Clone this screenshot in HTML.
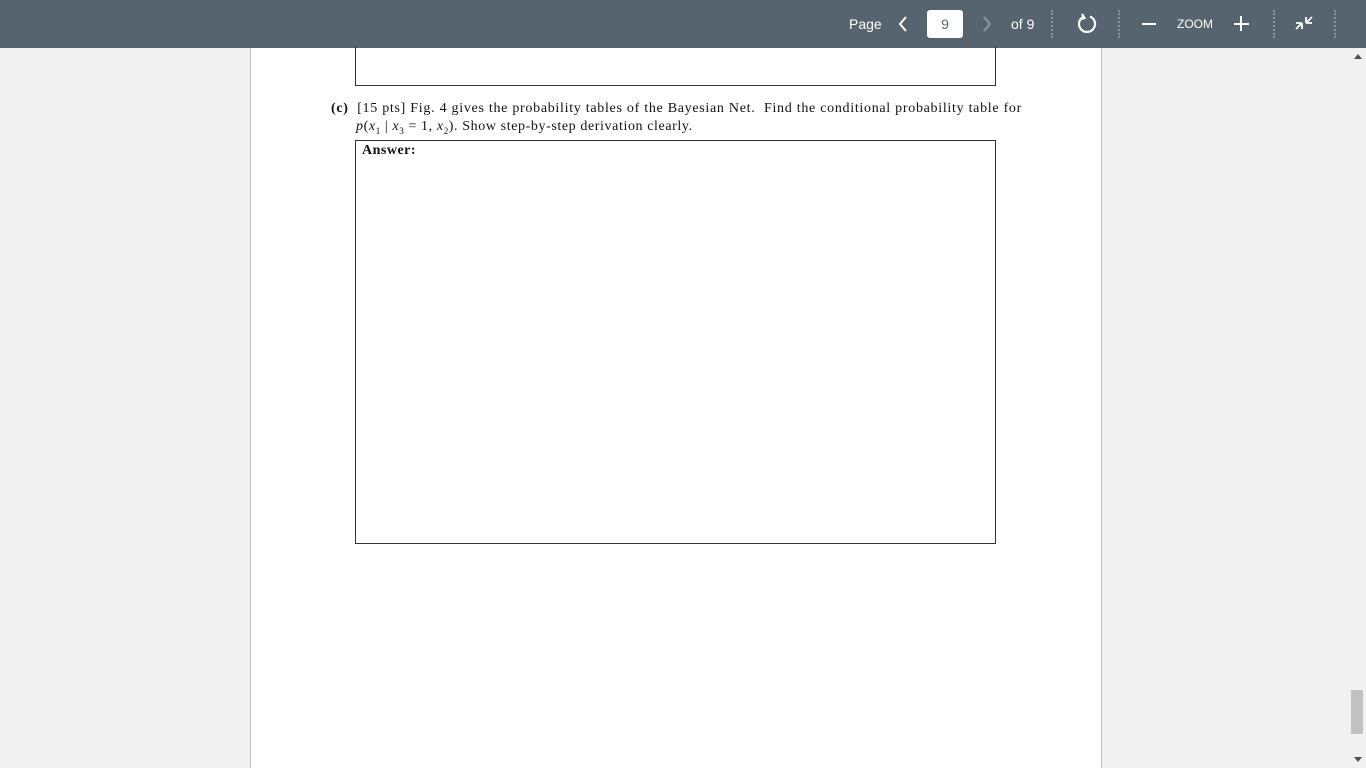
<!DOCTYPE html>
<html><head><meta charset="utf-8"><style>
*{margin:0;padding:0;box-sizing:border-box}
body{width:1366px;height:768px;overflow:hidden;background:#f1f1f1;position:relative;font-family:"Liberation Serif",serif}
.bar{position:absolute;left:0;top:0;width:1366px;height:48px;background:#566470;color:#fff;font-family:"Liberation Sans",sans-serif}
.bar span,.bar div{position:absolute}
.sep{width:0;border-left:2px dotted #8a96a0;top:10px;height:28px}
.page{position:absolute;left:250px;top:48px;width:852px;height:720px;background:#fff;border-left:1px solid #c4c4c8;border-right:1px solid #c4c4c8}
.box{position:absolute;border:1px solid #333}
.txt{position:absolute;font-size:14px;color:#111;white-space:nowrap}
</style></head><body>
<div class="bar">
<span style="left:849px;top:16px;font-size:14px">Page</span>
<svg style="position:absolute;left:897px;top:15px" width="12" height="18"><path d="M9 2L3 9L9 16" stroke="#fff" stroke-width="2" fill="none"/></svg>
<div style="left:927px;top:10px;width:36px;height:28px;background:#fff;border-radius:3px;color:#566470;font-size:14px;text-align:center;line-height:28px">9</div>
<svg style="position:absolute;left:981px;top:15px" width="12" height="18"><path d="M3 2L9 9L3 16" stroke="#8a96a0" stroke-width="2" fill="none"/></svg>
<span style="left:1011px;top:16px;font-size:14px">of 9</span>
<div class="sep" style="left:1051px"></div>
<svg style="position:absolute;left:1075px;top:12px" width="24" height="24"><path d="M15 4.5A8 8 0 1 1 8 5" stroke="#fff" stroke-width="2.2" fill="none"/><path d="M7 2L9.5 6L5 7.5" stroke="#fff" stroke-width="2.2" fill="none"/></svg>
<div class="sep" style="left:1118px"></div>
<div style="left:1142px;top:23px;width:14px;height:2px;background:#fff"></div>
<span style="left:1177px;top:17px;font-size:12px">ZOOM</span>
<div style="left:1234px;top:23px;width:15px;height:2px;background:#fff"></div>
<div style="left:1240px;top:16px;width:2px;height:15px;background:#fff"></div>
<div class="sep" style="left:1273px"></div>
<svg style="position:absolute;left:1295px;top:14px" width="18" height="18"><path d="M11 9V3M11 9H17M11 9L17 3M7 9V15M7 9H1M7 9L1 15" stroke="#fff" stroke-width="1.8" fill="none"/></svg>
<div class="sep" style="left:1334px"></div>
</div>
<div class="page">
<div class="box" style="left:104px;top:-2px;width:641px;height:40px;border-top:none"></div>
<div class="txt" style="left:80px;top:53px;width:691px;letter-spacing:0.7px;text-align:justify;text-align-last:justify;white-space:normal"><b>(c)</b>&nbsp; [15 pts] Fig. 4 gives the probability tables of the Bayesian Net.&nbsp; Find the conditional probability table for</div>
<div class="txt" style="left:105px;top:71px;letter-spacing:0.6px"><i>p</i>(<i>x</i><sub style="font-size:9px">1</sub> | <i>x</i><sub style="font-size:9px">3</sub> = 1, <i>x</i><sub style="font-size:9px">2</sub>). Show step-by-step derivation clearly.</div>
<div class="box" style="left:104px;top:92px;width:641px;height:404px"></div>
<div class="txt" style="left:111px;top:95px;letter-spacing:0.5px"><b>Answer:</b></div>
</div>
<svg style="position:absolute;left:1353px;top:53px" width="10" height="8"><path d="M1 6L5 1L9 6Z" fill="#505050"/></svg>
<div style="position:absolute;left:1351px;top:690px;width:12px;height:44px;background:#c1c1c1"></div>
<svg style="position:absolute;left:1353px;top:755px" width="10" height="8"><path d="M1 2L5 7L9 2Z" fill="#505050"/></svg>
</body></html>
